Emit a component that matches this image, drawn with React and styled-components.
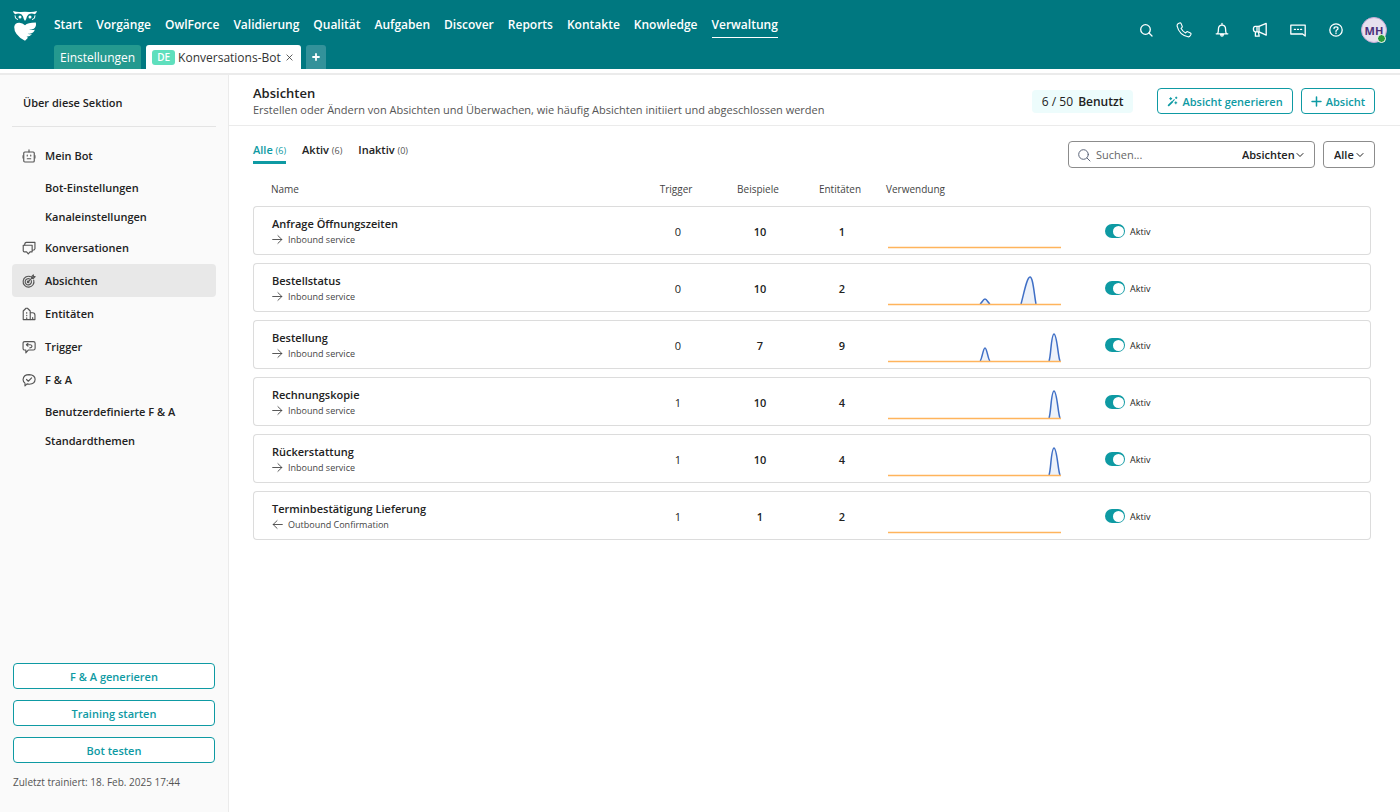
import { useState } from "react";
import styled, { createGlobalStyle, css } from "styled-components";

const theme = {
  colors: {
    header: "#007880",
    primary: "#0e9aa3",
    text: "#222222",
    grey: "#555555",
    border: "#dcdcdc",
    line: "#ebebeb",
    sidebar: "#fafafa",
    active: "#e8e8e8",
    orange: "#ffb45c",
    blue: "#3f6fc6",
  },
  weights: {
    medium: 600,
  },
  font: '"Open Sans", "Noto Sans", sans-serif',
};

const NAV = [
  "Start",
  "Vorgänge",
  "OwlForce",
  "Validierung",
  "Qualität",
  "Aufgaben",
  "Discover",
  "Reports",
  "Kontakte",
  "Knowledge",
  "Verwaltung",
];

const MENU = [
  { label: "Mein Bot", icon: "bot", children: ["Bot-Einstellungen", "Kanaleinstellungen"] },
  { label: "Konversationen", icon: "chats" },
  { label: "Absichten", icon: "target", active: true },
  { label: "Entitäten", icon: "building" },
  { label: "Trigger", icon: "trigger" },
  { label: "F & A", icon: "check", children: ["Benutzerdefinierte F & A", "Standardthemen"] },
];

const TABS = [
  { label: "Alle", count: 6 },
  { label: "Aktiv", count: 6 },
  { label: "Inaktiv", count: 0 },
];

const SMALL_LOW = "M92 31 C94 30 95 26 97 26 C99 26 100 30 102 31";
const SMALL_HIGH = "M92 31 C94 30 95 18 97 18 C99 18 100 30 102 31";
const PEAK_WIDE = "M133 31 C136 20 139 4 142 4 C145 4 146 20 148 31";
const PEAK_END = "M161 31 C163 27 163 4 166 4 C169 4 170 27 172 31";

const INTENTS = [
  { name: "Anfrage Öffnungszeiten", type: "Inbound service", trigger: 0, examples: 10, entities: 1, peaks: [] },
  { name: "Bestellstatus", type: "Inbound service", trigger: 0, examples: 10, entities: 2, peaks: [SMALL_LOW, PEAK_WIDE] },
  { name: "Bestellung", type: "Inbound service", trigger: 0, examples: 7, entities: 9, peaks: [SMALL_HIGH, PEAK_END] },
  { name: "Rechnungskopie", type: "Inbound service", trigger: 1, examples: 10, entities: 4, peaks: [PEAK_END] },
  { name: "Rückerstattung", type: "Inbound service", trigger: 1, examples: 10, entities: 4, peaks: [PEAK_END] },
  { name: "Terminbestätigung Lieferung", type: "Outbound Confirmation", outbound: true, trigger: 1, examples: 1, entities: 2, peaks: [] },
];

const ICONS = {
  search: (
    <>
      <circle cx="7.5" cy="7.5" r="4.8" />
      <path d="M11 11 L14 14" />
    </>
  ),
  phone: (
    <path
      strokeWidth="1.1"
      d="M2.4 1.6 L3.6 1 Q4.6 .6 5.1 1.6 L6.2 4.2 Q6.5 5 5.8 5.6 L5 6.3 Q6.4 9.3 9.6 11 L10.4 10.1 Q11 9.4 11.8 9.8 L14.4 11 Q15.3 11.5 14.9 12.4 L14.3 13.6 Q13.6 15 12 14.8 Q3.4 13.2 1.1 4.2 Q.9 2.4 2.4 1.6 Z"
    />
  ),
  bell: (
    <>
      <path d="M2.2 11.8 H13.8 M3.6 11.6 Q4.4 10.4 4.4 7.4 Q4.4 3.2 8 3.2 Q11.6 3.2 11.6 7.4 Q11.6 10.4 12.4 11.6 M8 1.4 V3" />
      <path d="M6.6 12.4 Q6.8 14.2 8 14.2 Q9.2 14.2 9.4 12.4 Z" />
    </>
  ),
  megaphone: (
    <>
      <path d="M7 4.4 L14.2 1.4 V13.2 L7 9.8 Z" />
      <path d="M7 4.4 H3.2 Q1.4 4.6 1.4 7.1 Q1.4 9.6 3.2 9.8 H7 M5 4.6 V9.6 M3.4 10 V14.2 H7.2 L6.4 10" />
    </>
  ),
  chat: (
    <>
      <path d="M.8 3.2 H15.2 V14 L12.6 12 H.8 Z" />
      <path d="M4.4 7.4 H5.4 M7.5 7.4 H8.5 M10.6 7.4 H11.6" />
    </>
  ),
  help: (
    <>
      <circle cx="8" cy="8" r="6.2" />
      <path d="M6 6.6 Q6 4.8 8 4.8 Q10 4.8 10 6.5 Q10 7.5 8.8 8 Q8 8.4 8 9.4 M8 11 V11.6" />
    </>
  ),
  bot: (
    <>
      <rect x="2" y="3.4" width="12" height="11.4" rx="1.2" />
      <path d="M8 1 V3.4 M6 7 V8 M10 7 V8 M6 11.2 H10" />
      <path strokeWidth=".9" d="M1 7.6 V10.4 M15 7.6 V10.4" />
    </>
  ),
  chats: (
    <>
      <path d="M1.4 4.8 H11.6 V12.4 H9.2 L7.2 14.8 L5.2 12.4 H2.8 Q1.4 12.4 1.4 11 Z" />
      <path d="M3 4.6 Q3.2 1.6 5 1.6 H14.8 V8.8 Q14.6 10.4 12 10.6" />
    </>
  ),
  target: (
    <>
      <path d="M9.6 3 A6.2 6.2 0 1 0 13.4 7" />
      <path d="M8.8 5.6 A3.6 3.6 0 1 0 10.6 7.6" />
      <path d="M7 9 L12.4 3.6 M11 5 V3 L13 1 V3 H15 L13 5 Z" />
      <circle cx="7" cy="9" r=".9" />
    </>
  ),
  building: (
    <>
      <path d="M1.4 14.4 V4.6 L4.6 1.4 H6.2 L9.4 4.6 V14.4 Z" />
      <path d="M9.6 6.6 H12.2 Q14.8 6.6 14.8 9.4 V14.4 H9.6 M5.4 6.4 V7 M5.4 9.4 V10 M5.4 12.4 V14 M12.2 12 V14" />
    </>
  ),
  trigger: (
    <>
      <path d="M3.2 1.8 H13 Q15 1.8 15 3.8 V9.4 Q15 11.4 13 11.4 H7.4 L4.4 14.6 V11.4 H3.2 Q1.2 11.4 1.2 9.4 V3.8 Q1.2 1.8 3.2 1.8 Z" />
      <path d="M6.8 3.8 L5 5.4 L6.8 7 M5.2 5.4 H9.6 Q11.4 5.6 11.4 7.2 Q11.4 8.8 9 9" />
    </>
  ),
  check: (
    <>
      <path d="M3.4 14.8 V11.6 Q1.2 10 1.2 7.4 Q1.8 1.8 8.2 1.8 Q14.8 2 15 7.2 Q14.8 12.6 8.4 12.8 Q7 12.8 5.8 12.4 Z" />
      <path d="M5.2 7.4 L7.2 9.4 L11 5.6" />
    </>
  ),
  wand: (
    <>
      <path strokeWidth="2.6" d="M2.4 13.6 L7.6 8.4" />
      <path strokeWidth="1.6" d="M8.6 7.4 L10.6 5.4 M5.4 2.4 V5.2 M4 3.8 H6.8 M13.4 1.6 V3.6 M12.4 2.6 H14.4 M12.8 8.4 V11.2 M11.4 9.8 H14.2" />
    </>
  ),
  plus: <path strokeWidth="2.2" d="M8 1.5 V14.5 M1.5 8 H14.5" />,
  plusBold: <path strokeWidth="3.6" d="M8 2 V14 M2 8 H14" />,
  close: <path strokeWidth="1.8" d="M2 2 L14 14 M14 2 L2 14" />,
  chevron: <path strokeWidth="2" d="M2 5 L8 11 L14 5" />,
  right: <path d="M1 8 H14.4 M8.6 2.4 L14.4 8 L8.6 13.6" />,
  left: <path d="M15 8 H1.6 M7.4 2.4 L1.6 8 L7.4 13.6" />,
};

function Icon({ name, size = 16 }) {
  return (
    <IconStyled width={size} height={size} viewBox="0 0 16 16" aria-hidden="true">
      {ICONS[name]}
    </IconStyled>
  );
}

function Logo() {
  return (
    <svg width="24" height="30" viewBox="0 0 24 30" role="img" aria-label="Logo">
      <path
        fill="#fff"
        d="M0 0 Q4 1.4 8 1 Q12 .6 16 1 Q20 1.4 24 0 Q23.4 2.4 21.8 3.2 Q18 1.8 15.4 3.6 Q13.8 5 13.2 8 L12 10 L10.8 8 Q10.2 5 8.6 3.6 Q6 1.8 2.2 3.2 Q.6 2.4 0 0 Z"
      />
      <g fill="none" stroke="#fff" strokeWidth="1">
        <path d="M2 4.4 Q1.6 8 5 8.6" />
        <path d="M22 4.4 Q22.4 8 19 8.6" />
      </g>
      <circle cx="7" cy="6" r="1.5" fill="#fff" />
      <circle cx="17" cy="6" r="1.5" fill="#fff" />
      <path
        fill="#fff"
        d="M1.2 16 Q2 11.6 6.4 11.8 Q9.6 12 12 14.2 Q14.6 11.6 22.8 11.6 Q23.8 15.6 20.8 17.8 Q18.6 18.8 16 18.8 Q19 19.4 21.8 18.8 Q20.8 22.2 16.6 22.8 L14.6 22.8 Q17 23.6 19 23.2 Q17 25.6 13.6 25.8 L15 26.8 L12 29.8 Q1 24 1.2 16 Z"
      />
    </svg>
  );
}

function Sparkline({ peaks }) {
  return (
    <svg width="173" height="33" viewBox="0 0 173 33" role="img" aria-label="Verwendung">
      {peaks.map((d) => (
        <path key={d} d={d} fill="#edf2fa" stroke={theme.colors.blue} strokeWidth="1.5" />
      ))}
      <path d="M0 31.5 H173" stroke={theme.colors.orange} strokeWidth="1.4" />
    </svg>
  );
}

function IntentRow({ intent }) {
  const [enabled, setEnabled] = useState(true);
  return (
    <tr>
      <Cell>
        <IntentName>{intent.name}</IntentName>
        <IntentType>
          <Icon name={intent.outbound ? "left" : "right"} size={11} />
          {intent.type}
        </IntentType>
      </Cell>
      <Cell $center>{intent.trigger}</Cell>
      <Cell $center $bold>{intent.examples}</Cell>
      <Cell $center $bold>{intent.entities}</Cell>
      <Cell $chart>
        <Sparkline peaks={intent.peaks} />
      </Cell>
      <Cell>
        <SwitchLabel>
          <Switch type="checkbox" role="switch" checked={enabled} onChange={(e) => setEnabled(e.target.checked)} />
          {enabled ? "Aktiv" : "Inaktiv"}
        </SwitchLabel>
      </Cell>
    </tr>
  );
}

export default function App() {
  const [tab, setTab] = useState("Alle");

  return (
    <Page>
      <GlobalStyle />
      <Header>
        <LogoLink href="#" aria-label="Startseite">
          <Logo />
        </LogoLink>
        <HeaderMain>
          <Nav aria-label="Hauptnavigation">
            {NAV.map((item) => (
              <NavLink key={item} href="#" $active={item === "Verwaltung"}>
                {item}
              </NavLink>
            ))}
          </Nav>
          <PageTabs>
            <PageTab type="button">Einstellungen</PageTab>
            <OpenTab>
              <Language>DE</Language>
              Konversations-Bot
              <PlainButton type="button" aria-label="Tab schließen">
                <Icon name="close" size={7} />
              </PlainButton>
            </OpenTab>
            <AddTab type="button" aria-label="Neuer Tab">
              <Icon name="plusBold" size={8} />
            </AddTab>
          </PageTabs>
        </HeaderMain>
        <HeaderTools>
          {["search", "phone", "bell", "megaphone", "chat", "help"].map((icon) => (
            <ToolButton key={icon} type="button" aria-label={icon}>
              <Icon name={icon} />
            </ToolButton>
          ))}
          <Avatar type="button">
            MH
            <Presence />
          </Avatar>
        </HeaderTools>
      </Header>

      <Body>
        <Sidebar>
          <SectionTitle>Über diese Sektion</SectionTitle>
          <Menu>
            {MENU.map((item) => (
              <div key={item.label}>
                <MenuLink href="#" $active={item.active}>
                  <Icon name={item.icon} size={14} />
                  {item.label}
                </MenuLink>
                {item.children && (
                  <SubMenu>
                    {item.children.map((child) => (
                      <SubLink key={child} href="#">
                        {child}
                      </SubLink>
                    ))}
                  </SubMenu>
                )}
              </div>
            ))}
          </Menu>
          <SidebarActions>
            <OutlineButton type="button">F &amp; A generieren</OutlineButton>
            <OutlineButton type="button">Training starten</OutlineButton>
            <OutlineButton type="button">Bot testen</OutlineButton>
            <Trained>Zuletzt trainiert: 18. Feb. 2025 17:44</Trained>
          </SidebarActions>
        </Sidebar>

        <Main>
          <TitleBar>
            <div>
              <Title>Absichten</Title>
              <Subtitle>
                Erstellen oder Ändern von Absichten und Überwachen, wie häufig Absichten initiiert und abgeschlossen
                werden
              </Subtitle>
            </div>
            <TitleActions>
              <Usage>
                6 / 50 <strong>Benutzt</strong>
              </Usage>
              <OutlineButton type="button">
                <Icon name="wand" size={11} />
                Absicht generieren
              </OutlineButton>
              <OutlineButton type="button">
                <Icon name="plus" size={11} />
                Absicht
              </OutlineButton>
            </TitleActions>
          </TitleBar>

          <Toolbar>
            <Tabs role="tablist">
              {TABS.map(({ label, count }) => (
                <Tab
                  key={label}
                  type="button"
                  role="tab"
                  aria-selected={tab === label}
                  $active={tab === label}
                  onClick={() => setTab(label)}
                >
                  {label} <small>({count})</small>
                </Tab>
              ))}
            </Tabs>
            <Filters>
              <SearchBox>
                <Icon name="search" size={16} />
                <SearchInput type="search" placeholder="Suchen..." aria-label="Suchen" />
                <SelectWrap>
                  <Select aria-label="Suchen in" $width="54px">
                    <option>Absichten</option>
                  </Select>
                  <Icon name="chevron" size={8} />
                </SelectWrap>
              </SearchBox>
              <FilterBox>
                <Select aria-label="Status" $width="22px">
                  <option>Alle</option>
                </Select>
                <Icon name="chevron" size={8} />
              </FilterBox>
            </Filters>
          </Toolbar>

          <Table>
            <colgroup>
              <col />
              <Col $width="82px" />
              <Col $width="82px" />
              <Col $width="82px" />
              <Col $width="204px" />
              <Col $width="284px" />
            </colgroup>
            <thead>
              <tr>
                <HeadCell>Name</HeadCell>
                <HeadCell $center>Trigger</HeadCell>
                <HeadCell $center>Beispiele</HeadCell>
                <HeadCell $center>Entitäten</HeadCell>
                <HeadCell $chart>Verwendung</HeadCell>
                <HeadCell aria-label="Status" />
              </tr>
            </thead>
            <tbody>
              {INTENTS.map((intent) => (
                <IntentRow key={intent.name} intent={intent} />
              ))}
            </tbody>
          </Table>
        </Main>
      </Body>
    </Page>
  );
}

const GlobalStyle = createGlobalStyle`
  * {
    box-sizing: border-box;
  }

  body {
    margin: 0;
    background: #fff;
    color: ${theme.colors.text};
    font-family: ${theme.font};
    font-size: 11px;
  }

  button, input, select {
    font: inherit;
    color: inherit;
  }

  button {
    cursor: pointer;
  }

  a {
    color: inherit;
    text-decoration: none;
  }
`;

const IconStyled = styled.svg`
  flex-shrink: 0;
  fill: none;
  stroke: currentColor;
  stroke-width: 1.3;
  stroke-linejoin: round;
  stroke-linecap: round;
`;

const Page = styled.div`
  display: flex;
  flex-direction: column;
  min-height: 100vh;
`;

const Header = styled.header`
  display: flex;
  padding: 0 13px;
  background: ${theme.colors.header};
  color: #fff;
`;

const LogoLink = styled.a`
  display: block;
  width: 41px;
  padding-top: 11px;
`;

const HeaderMain = styled.div`
  display: flex;
  flex-direction: column;
  gap: 7px;
  flex: 1;
`;

const Nav = styled.nav`
  display: flex;
  gap: 14px;
  padding-top: 15px;
`;

const NavLink = styled.a`
  padding-bottom: 2px;
  font-size: 12px;
  font-weight: ${theme.weights.medium};
  line-height: 20px;
  border-bottom: 1px solid ${({ $active }) => ($active ? "#fff" : "transparent")};
`;

const PageTabs = styled.div`
  display: flex;
  gap: 5px;
`;

const tabStyle = css`
  display: flex;
  align-items: center;
  height: 24px;
  padding: 0 6px;
  border: none;
  border-radius: 3px 3px 0 0;
  font-size: 12px;
`;

const PageTab = styled.button`
  ${tabStyle}
  background: #24998f;
  color: #fff;
`;

const OpenTab = styled.div`
  ${tabStyle}
  gap: 3px;
  background: #fff;
  color: #333;
`;

const Language = styled.span`
  padding: 0 5px;
  border-radius: 3px;
  background: #5fdfbd;
  color: #fff;
  font-size: 10px;
  font-weight: 600;
  line-height: 15px;
`;

const PlainButton = styled.button`
  display: flex;
  padding: 2px;
  border: none;
  background: none;
`;

const AddTab = styled.button`
  ${tabStyle}
  background: #33929a;
  color: #fff;
`;

const HeaderTools = styled.div`
  display: flex;
  align-items: center;
  gap: 12px;
  height: 60px;
`;

const ToolButton = styled(PlainButton)`
  justify-content: center;
  width: 26px;
  padding: 0;
  color: #fff;
`;

const Avatar = styled.button`
  position: relative;
  width: 26px;
  height: 26px;
  padding: 0;
  border: 1px solid #c9a9d6;
  border-radius: 50%;
  background: #e6e0ee;
  color: #4a2f7a;
  font-size: 11px;
  font-weight: 700;
`;

const Presence = styled.span`
  position: absolute;
  right: 0;
  bottom: -1px;
  width: 9px;
  height: 9px;
  border: 1px solid #fff;
  border-radius: 50%;
  background: #2b9b3a;
`;

const Body = styled.div`
  display: flex;
  flex: 1;
  margin-top: 4px;
  border-top: 2px solid ${theme.colors.line};
`;

const Sidebar = styled.aside`
  display: flex;
  flex-direction: column;
  flex-shrink: 0;
  width: 229px;
  padding: 0 12px;
  background: ${theme.colors.sidebar};
  border-right: 1px solid ${theme.colors.line};
`;

const SectionTitle = styled.h2`
  margin: 0;
  padding: 19px 11px 14px;
  border-bottom: 1px solid #e4e4e4;
  font-size: 11px;
  font-weight: ${theme.weights.medium};
  line-height: 18px;
`;

const Menu = styled.nav`
  margin-top: 12px;
`;

const MenuLink = styled.a`
  display: flex;
  align-items: center;
  gap: 9px;
  height: 33px;
  padding: 0 10px;
  border-radius: 4px;
  background: ${({ $active }) => ($active ? theme.colors.active : "none")};
  font-weight: ${theme.weights.medium};

  svg {
    color: #555;
  }
`;

const SubMenu = styled.div`
  display: flex;
  flex-direction: column;
  padding-top: 1px;
`;

const SubLink = styled.a`
  padding-left: 33px;
  font-weight: ${theme.weights.medium};
  line-height: 29px;
`;

const SidebarActions = styled.div`
  display: flex;
  flex-direction: column;
  gap: 11px;
  margin-top: auto;
  padding: 0 1px 22px;
`;

const OutlineButton = styled.button`
  display: flex;
  align-items: center;
  justify-content: center;
  gap: 4px;
  height: 26px;
  padding: 0 9px;
  border: 1px solid ${theme.colors.primary};
  border-radius: 4px;
  background: #fff;
  color: ${theme.colors.primary};
  font-weight: ${theme.weights.medium};
  white-space: nowrap;

  &:hover {
    background: #eefbfb;
  }
`;

const Trained = styled.p`
  margin: 0;
  color: ${theme.colors.grey};
  font-size: 10px;
  line-height: 16px;
`;

const Main = styled.main`
  flex: 1;
  min-width: 0;
`;

const TitleBar = styled.div`
  display: flex;
  align-items: center;
  justify-content: space-between;
  height: 51px;
  padding: 2px 25px 0 24px;
  border-bottom: 1px solid ${theme.colors.line};
`;

const Title = styled.h1`
  margin: 0;
  font-size: 13px;
  font-weight: ${theme.weights.medium};
  line-height: 18px;
`;

const Subtitle = styled.p`
  margin: 0;
  color: ${theme.colors.grey};
  line-height: 16px;
`;

const TitleActions = styled.div`
  display: flex;
  align-items: center;
  gap: 8px;
`;

const Usage = styled.span`
  margin-right: 16px;
  padding: 0 10px;
  border-radius: 4px;
  background: #edfcfc;
  font-size: 12px;
  line-height: 23px;

  strong {
    margin-left: 2px;
    font-weight: ${theme.weights.medium};
  }
`;

const Toolbar = styled.div`
  display: flex;
  justify-content: space-between;
  padding: 15px 25px 0 24px;
`;

const Tabs = styled.div`
  display: flex;
  gap: 16px;
`;

const Tab = styled.button`
  height: 23px;
  padding: 0 0 3px;
  border: none;
  border-bottom: 3px solid ${({ $active }) => ($active ? theme.colors.primary : "transparent")};
  background: none;
  color: ${({ $active }) => ($active ? theme.colors.primary : theme.colors.text)};
  font-weight: ${theme.weights.medium};

  small {
    color: ${({ $active }) => ($active ? theme.colors.primary : theme.colors.grey)};
    font-size: 9px;
    font-weight: 400;
  }
`;

const Filters = styled.div`
  display: flex;
  gap: 8px;
`;

const boxStyle = css`
  display: flex;
  align-items: center;
  height: 27px;
  padding: 0 10px;
  border: 1px solid #8c8c8c;
  border-radius: 4px;
`;

const SearchBox = styled.div`
  ${boxStyle}
  width: 247px;
  padding: 0 10px 0 7px;

  > svg {
    color: #5a6478;
    stroke-width: 1;
  }
`;

const SearchInput = styled.input`
  flex: 1;
  min-width: 0;
  padding: 0 4px;
  border: none;
  outline: none;
  background: none;

  &::placeholder {
    color: #666;
  }
`;

const SelectWrap = styled.div`
  display: flex;
  align-items: center;
`;

const FilterBox = styled.div`
  ${boxStyle}
`;

const Select = styled.select`
  width: ${({ $width }) => $width};
  padding: 0;
  border: none;
  outline: none;
  appearance: none;
  background: none;
  font-weight: ${theme.weights.medium};
`;

const Table = styled.table`
  width: calc(100% - 53px);
  margin: 0 29px 0 24px;
  border-spacing: 0 8px;
  table-layout: fixed;
`;

const Col = styled.col`
  width: ${({ $width }) => $width};
`;

const HeadCell = styled.th`
  height: 22px;
  padding: 4px ${({ $center }) => ($center ? "4px 0 0" : "0 0 18px")};
  ${({ $chart }) => $chart && "padding-left: 3px;"}
  color: #444;
  font-size: 10px;
  font-weight: 500;
  text-align: ${({ $center }) => ($center ? "center" : "left")};
`;

const Cell = styled.td`
  height: 49px;
  padding: 1px 0 0 ${({ $center, $chart }) => ($center ? "0" : $chart ? "5px" : "18px")};
  border: solid ${theme.colors.border};
  border-width: 1px 0;
  font-weight: ${({ $bold }) => ($bold ? 600 : 400)};
  text-align: ${({ $center }) => ($center ? "center" : "left")};

  &:first-child {
    border-left-width: 1px;
    border-radius: 4px 0 0 4px;
  }

  &:last-child {
    border-right-width: 1px;
    border-radius: 0 4px 4px 0;
  }

  > svg {
    display: block;
    margin-top: 3px;
  }
`;

const IntentName = styled.div`
  font-weight: ${theme.weights.medium};
  line-height: 16px;
`;

const IntentType = styled.div`
  display: flex;
  align-items: center;
  gap: 5px;
  color: #444;
  font-size: 9px;
  line-height: 15px;
`;

const SwitchLabel = styled.label`
  display: flex;
  align-items: center;
  gap: 5px;
  font-size: 9px;
`;

const Switch = styled.input`
  appearance: none;
  display: flex;
  align-items: center;
  width: 20px;
  height: 14px;
  margin: 0;
  padding: 1px;
  border-radius: 7px;
  background: #aaa;
  cursor: pointer;

  &::before {
    content: "";
    width: 11px;
    height: 11px;
    border-radius: 50%;
    background: #fff;
  }

  &:checked {
    justify-content: flex-end;
    background: ${theme.colors.primary};
  }
`;
